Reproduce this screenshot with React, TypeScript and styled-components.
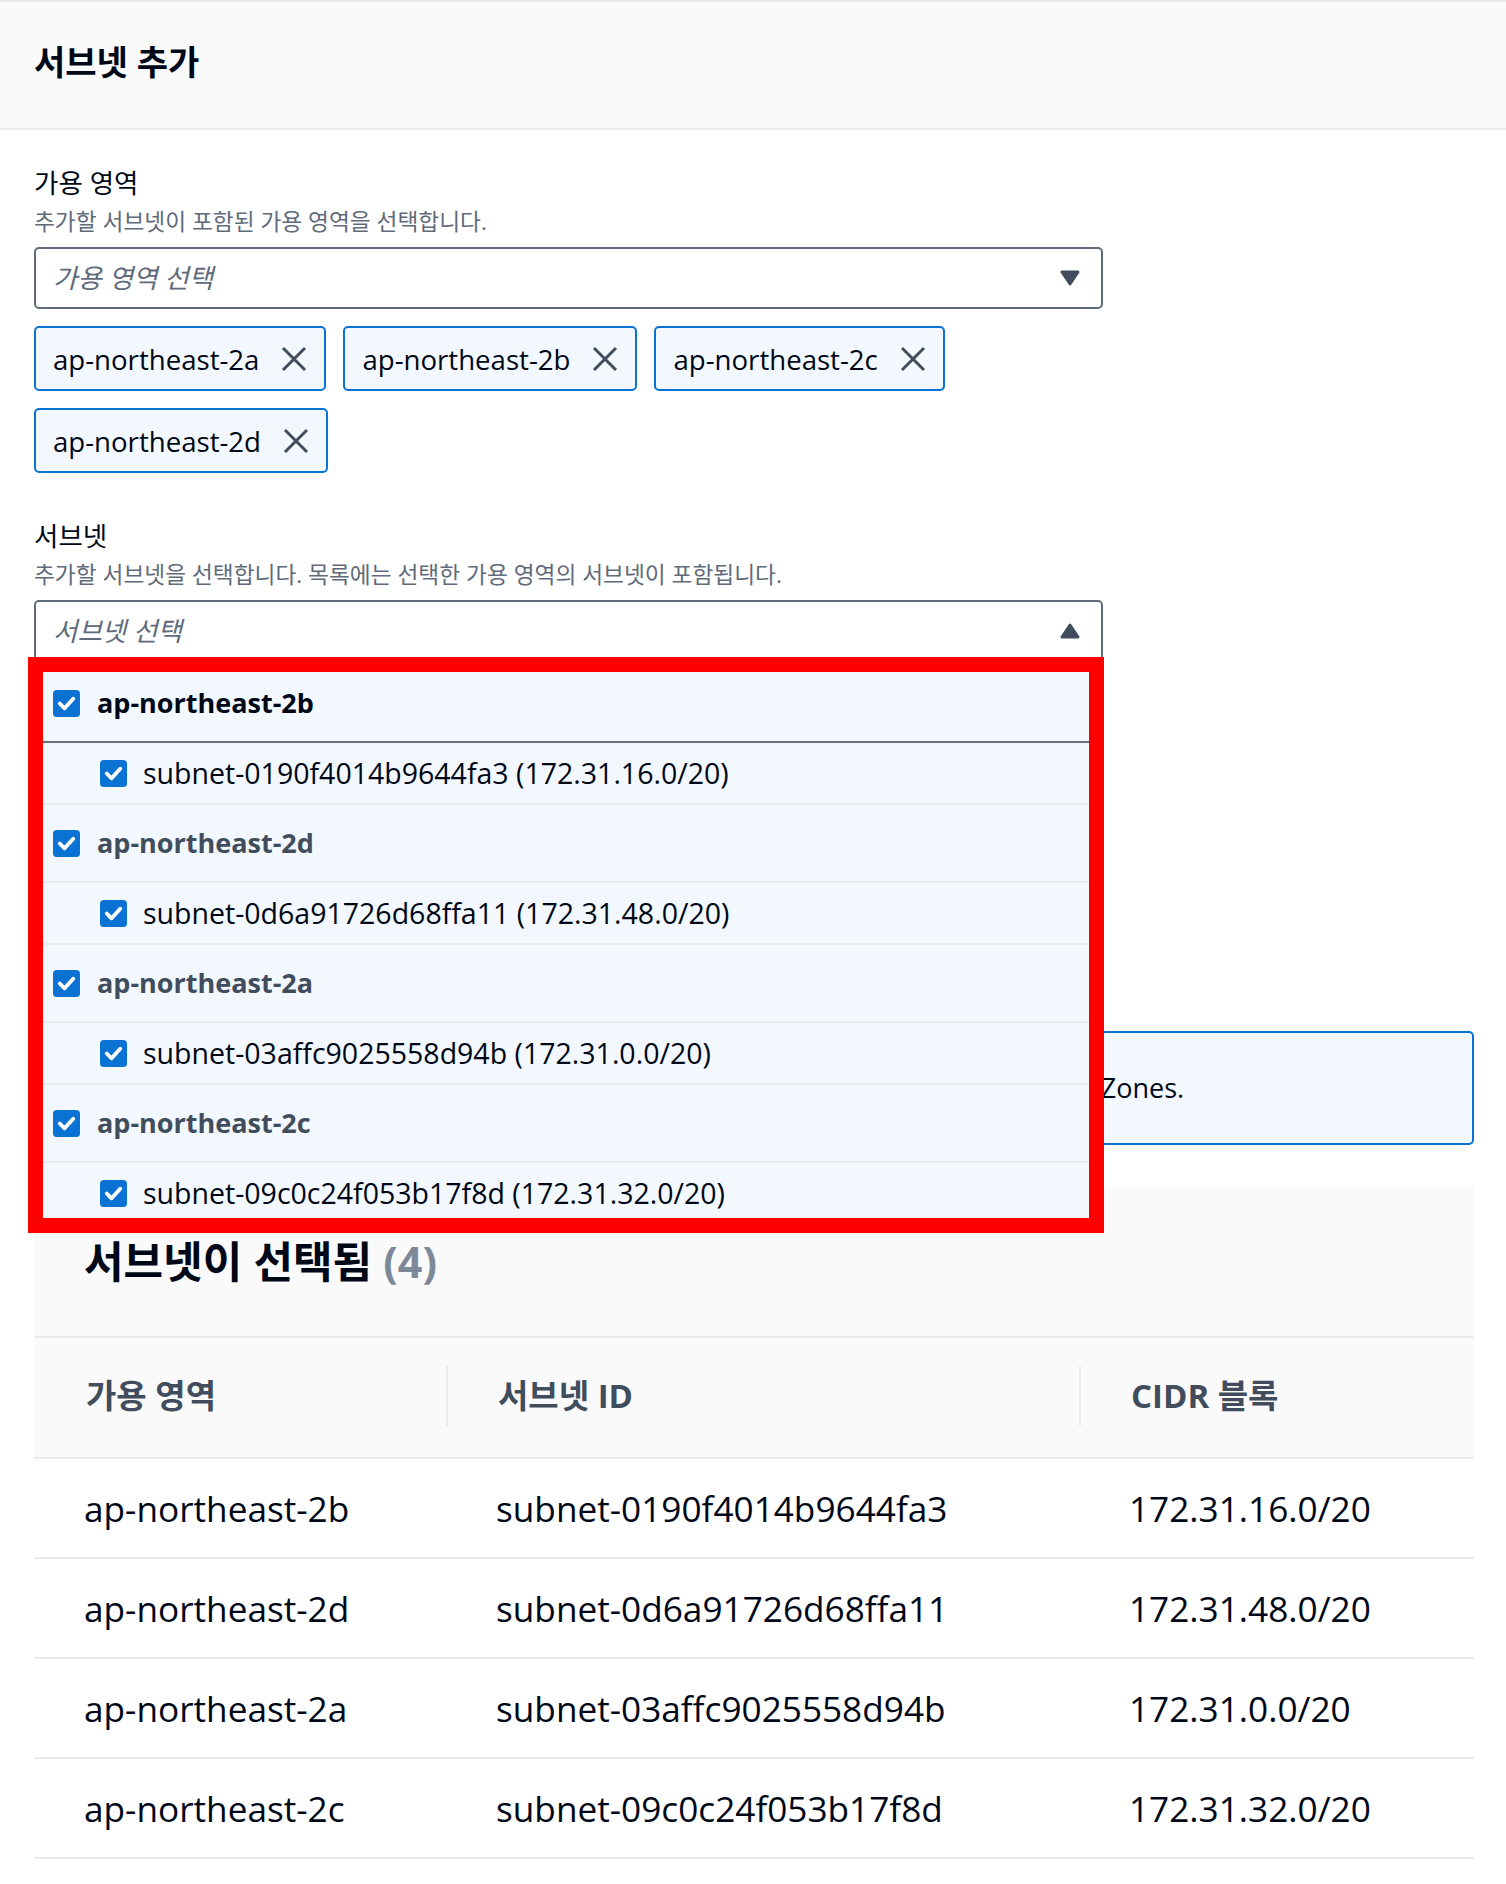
import React from "react";
import styled, { createGlobalStyle } from "styled-components";

const GlobalStyle = createGlobalStyle`
  html, body { margin: 0; padding: 0; background: #ffffff; }
  body {
    font-family: "Open Sans", "Noto Sans CJK KR", sans-serif;
    color: #000716;
    -webkit-font-smoothing: antialiased;
  }
  * { box-sizing: border-box; }
`;

const Page = styled.div`
  width: 1506px;
  min-height: 1884px;
  background: #ffffff;
`;

const Header = styled.header`
  height: 130px;
  border-top: 2px solid #e9ebed;
  border-bottom: 2px solid #e9ebed;
  background: #fafafa;
  display: flex;
  align-items: center;
  padding: 0 34px 6px;
`;

const Title = styled.h1`
  margin: 0;
  font-size: 34px;
  line-height: 42px;
  font-weight: 700;
  color: #000716;
`;

const Content = styled.main`
  padding: 36px 32px 0 34px;
  display: flex;
  flex-direction: column;
`;

const Field = styled.section<{ $gap?: number }>`
  display: flex;
  flex-direction: column;
  width: 1069px;
  margin-top: ${(p) => p.$gap ?? 0}px;
`;

const Label = styled.div`
  font-size: 26.5px;
  line-height: 35px;
  color: #000716;
`;

const Description = styled.div`
  margin-top: 5px;
  font-size: 22.7px;
  line-height: 31px;
  color: #5f6b7a;
`;

const SelectWrap = styled.div`
  position: relative;
  margin-top: 10px;
`;

const SelectBox = styled.div<{ $open?: boolean }>`
  height: 62px;
  border: 2px solid #5f6b7a;
  border-radius: ${(p) => (p.$open ? "5px 5px 0 0" : "5px")};
  background: #ffffff;
  display: flex;
  align-items: center;
  justify-content: space-between;
  padding: 0 21px 0 17px;
`;

const Placeholder = styled.span`
  font-size: 26.5px;
  line-height: 34px;
  font-style: italic;
  color: #5f6b7a;
`;

const TokenList = styled.div`
  margin-top: 17px;
  display: flex;
  flex-wrap: wrap;
  gap: 17px 17px;
`;

const Token = styled.div`
  height: 65px;
  display: inline-flex;
  align-items: center;
  gap: 22px;
  padding: 0 17px;
  border: 2px solid #0972d3;
  border-radius: 5px;
  background: #f2f8fd;
`;

const TokenText = styled.span`
  font-size: 27.6px;
  line-height: 36px;
  color: #000716;
`;

const Dismiss = styled.button`
  display: flex;
  padding: 0;
  margin: 0;
  border: none;
  background: none;
  color: #414d5c;
  cursor: pointer;
`;

const Dropdown = styled.div`
  position: absolute;
  left: 0;
  right: 0;
  top: 100%;
  z-index: 2;
  padding-top: 3px;
  background: #f2f8fd;
  border: 2px solid #0972d3;
  border-top: none;
  border-radius: 0 0 5px 5px;
  display: flex;
  flex-direction: column;
`;

const GroupRow = styled.div<{ $strong?: boolean; $dim?: boolean }>`
  height: 78px;
  display: flex;
  align-items: center;
  gap: 17px;
  padding-left: 17px;
  border-bottom: 2px solid ${(p) => (p.$strong ? "#687078" : "#e9ebed")};
  font-size: 27px;
  line-height: 36px;
  font-weight: 700;
  color: ${(p) => (p.$dim ? "#414d5c" : "#000716")};
`;

const OptionRow = styled.div`
  height: 62px;
  display: flex;
  align-items: center;
  gap: 16px;
  padding-left: 64px;
  border-bottom: 2px solid #e9ebed;
  font-size: 28.5px;
  line-height: 36px;
  color: #000716;
`;

const Annotation = styled.div`
  position: absolute;
  left: -6px;
  top: 57px;
  width: 1076px;
  height: 576px;
  border: 15px solid #ff0000;
  z-index: 3;
  pointer-events: none;
`;

const Alert = styled.div`
  margin-top: 369px;
  height: 114px;
  border: 2px solid #0972d3;
  border-radius: 5px;
  background: #f2f8fd;
  display: flex;
  align-items: center;
  gap: 16px;
  padding: 0 24px;
`;

const AlertText = styled.span<{ $indent: number }>`
  padding-left: ${(p) => p.$indent}px;
  font-size: 27px;
  line-height: 36px;
  color: #000716;
  white-space: nowrap;
`;

const Container = styled.section`
  margin-top: 42px;
  display: flex;
  flex-direction: column;
`;

const ContainerHeader = styled.div`
  height: 151px;
  background: #fafafa;
  border-bottom: 2px solid #e9ebed;
  display: flex;
  align-items: center;
  padding-left: 50px;
`;

const ContainerTitle = styled.h2`
  margin: 0;
  font-size: 43px;
  line-height: 54px;
  font-weight: 700;
  color: #000716;
`;

const Count = styled.span`
  color: #7d8998;
`;

const Row = styled.div<{ $head?: boolean }>`
  display: grid;
  grid-template-columns: 412px 633px 1fr;
  align-items: center;
  height: ${(p) => (p.$head ? 121 : 100)}px;
  background: ${(p) => (p.$head ? "#fafafa" : "#ffffff")};
  border-bottom: 2px solid #e9ebed;
`;

const HeadCell = styled.div<{ $sep?: boolean }>`
  position: relative;
  height: 100%;
  display: flex;
  align-items: center;
  padding-left: 52px;
  padding-bottom: 3px;
  font-size: 33px;
  line-height: 42px;
  font-weight: 700;
  color: #414d5c;
  &::before {
    content: "";
    display: ${(p) => (p.$sep ? "block" : "none")};
    position: absolute;
    left: 0;
    top: 28px;
    width: 2px;
    height: 60px;
    background: #e9ebed;
  }
`;

const Cell = styled.div`
  padding-left: 50px;
  font-size: 35.2px;
  line-height: 44px;
  color: #000716;
  white-space: nowrap;
`;

const CloseIcon = () => (
  <svg width="26" height="26" viewBox="0 0 26 26" fill="none">
    <path d="M2 2L24 24M24 2L2 24" stroke="currentColor" strokeWidth="3" />
  </svg>
);

const Caret = ({ up }: { up?: boolean }) => (
  <svg width="20" height="16" viewBox="0 0 20 16">
    <path
      d={up ? "M2 14H18L10 2Z" : "M2 2H18L10 14Z"}
      fill="#414d5c"
      stroke="#414d5c"
      strokeWidth="3"
      strokeLinejoin="round"
    />
  </svg>
);

const Check = () => (
  <svg width="27" height="27" viewBox="0 0 14 14">
    <rect x="0" y="0" width="14" height="14" rx="2" fill="#0972d3" />
    <polyline
      points="3.5,7 6,9.5 10.5,4.5"
      fill="none"
      stroke="#ffffff"
      strokeWidth="2"
      strokeLinecap="round"
      strokeLinejoin="round"
    />
  </svg>
);

const InfoIcon = () => (
  <svg width="30" height="30" viewBox="0 0 16 16">
    <circle cx="8" cy="8" r="7" fill="none" stroke="#0972d3" strokeWidth="2" />
    <path d="M8 7v5M8 4v1.5" stroke="#0972d3" strokeWidth="2" />
  </svg>
);

const zones = ["ap-northeast-2a", "ap-northeast-2b", "ap-northeast-2c", "ap-northeast-2d"];

const groups = [
  { zone: "ap-northeast-2b", subnet: "subnet-0190f4014b9644fa3", cidr: "172.31.16.0/20" },
  { zone: "ap-northeast-2d", subnet: "subnet-0d6a91726d68ffa11", cidr: "172.31.48.0/20" },
  { zone: "ap-northeast-2a", subnet: "subnet-03affc9025558d94b", cidr: "172.31.0.0/20" },
  { zone: "ap-northeast-2c", subnet: "subnet-09c0c24f053b17f8d", cidr: "172.31.32.0/20" },
];

export default function App() {
  return (
    <Page>
      <GlobalStyle />
      <Header>
        <Title>서브넷 추가</Title>
      </Header>
      <Content>
        <Field>
          <Label>가용 영역</Label>
          <Description>추가할 서브넷이 포함된 가용 영역을 선택합니다.</Description>
          <SelectWrap>
            <SelectBox>
              <Placeholder>가용 영역 선택</Placeholder>
              <Caret />
            </SelectBox>
          </SelectWrap>
          <TokenList>
            {zones.map((z) => (
              <Token key={z}>
                <TokenText>{z}</TokenText>
                <Dismiss aria-label={`${z} 제거`}>
                  <CloseIcon />
                </Dismiss>
              </Token>
            ))}
          </TokenList>
        </Field>

        <Field $gap={46}>
          <Label>서브넷</Label>
          <Description>
            추가할 서브넷을 선택합니다. 목록에는 선택한 가용 영역의 서브넷이 포함됩니다.
          </Description>
          <SelectWrap>
            <SelectBox $open>
              <Placeholder>서브넷 선택</Placeholder>
              <Caret up />
            </SelectBox>
            <Dropdown>
              {groups.map((g, i) => (
                <React.Fragment key={g.zone}>
                  <GroupRow $strong={i === 0} $dim={i !== 0}>
                    <Check />
                    {g.zone}
                  </GroupRow>
                  <OptionRow>
                    <Check />
                    {g.subnet} ({g.cidr})
                  </OptionRow>
                </React.Fragment>
              ))}
            </Dropdown>
            <Annotation />
          </SelectWrap>
        </Field>

        <Alert>
          <InfoIcon />
          <AlertText $indent={7}>
            Only subnets in the supported Availability Zones can be added. See supported Zones.
          </AlertText>
        </Alert>

        <Container>
          <ContainerHeader>
            <ContainerTitle>
              서브넷이 선택됨 <Count>(4)</Count>
            </ContainerTitle>
          </ContainerHeader>
          <Row $head>
            <HeadCell>가용 영역</HeadCell>
            <HeadCell $sep>서브넷 ID</HeadCell>
            <HeadCell $sep>CIDR 블록</HeadCell>
          </Row>
          {groups.map((g) => (
            <Row key={g.subnet}>
              <Cell>{g.zone}</Cell>
              <Cell>{g.subnet}</Cell>
              <Cell>{g.cidr}</Cell>
            </Row>
          ))}
        </Container>
      </Content>
    </Page>
  );
}
